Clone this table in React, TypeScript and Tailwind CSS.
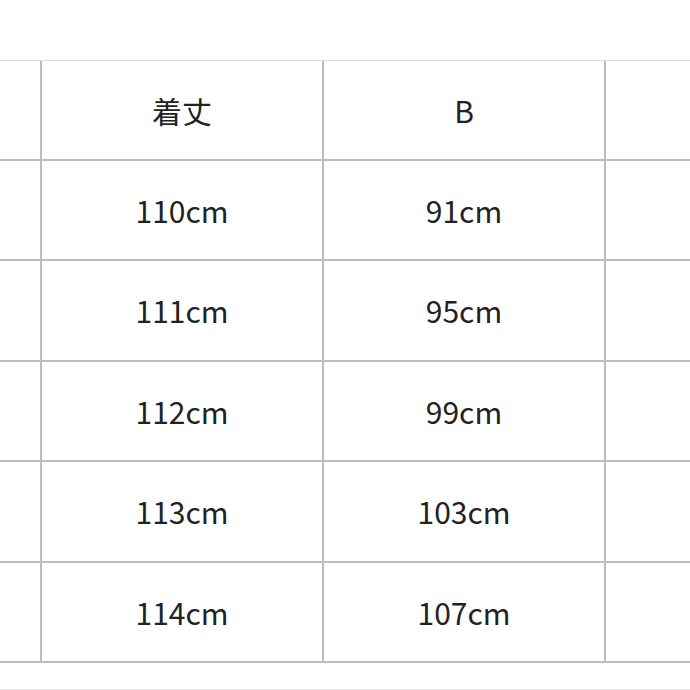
const ROWS = [
    ['110cm', '91cm'],
    ['111cm', '95cm'],
    ['112cm', '99cm'],
    ['113cm', '103cm'],
    ['114cm', '107cm'],
];

function Row({ cells, tall }: { cells: string[]; tall?: boolean }) {
    return (
        <div className={`grid grid-cols-[42px_282px_282px_1fr] border-b-2 border-[#bdbdbd] ${tall ? 'h-[101px]' : 'h-[100px]'}`}>
            <div className="border-r-2 border-[#bdbdbd]"></div>
            <div className="border-r-2 border-[#bdbdbd] flex items-center justify-center">{cells[0]}</div>
            <div className="border-r-2 border-[#bdbdbd] flex items-center justify-center">{cells[1]}</div>
            <div></div>
        </div>
    );
}

export default function App() {
    return (
        <div
            className="w-[690px] h-[690px] overflow-hidden bg-white text-[#222] text-[30px] pt-[60px]"
            style={{ fontFamily: '"Noto Sans CJK JP", "Noto Sans", sans-serif' }}
        >
            <div className="border-t border-[#dcdcdc]"></div>
            <Row cells={['着丈', 'B']} />
            {ROWS.map((r, i) => (
                <Row key={i} cells={r} tall={i === 1 || i === 3} />
            ))}
            <div className="mt-[26px] border-t-2 border-[#e6e6e6]"></div>
        </div>
    );
}
